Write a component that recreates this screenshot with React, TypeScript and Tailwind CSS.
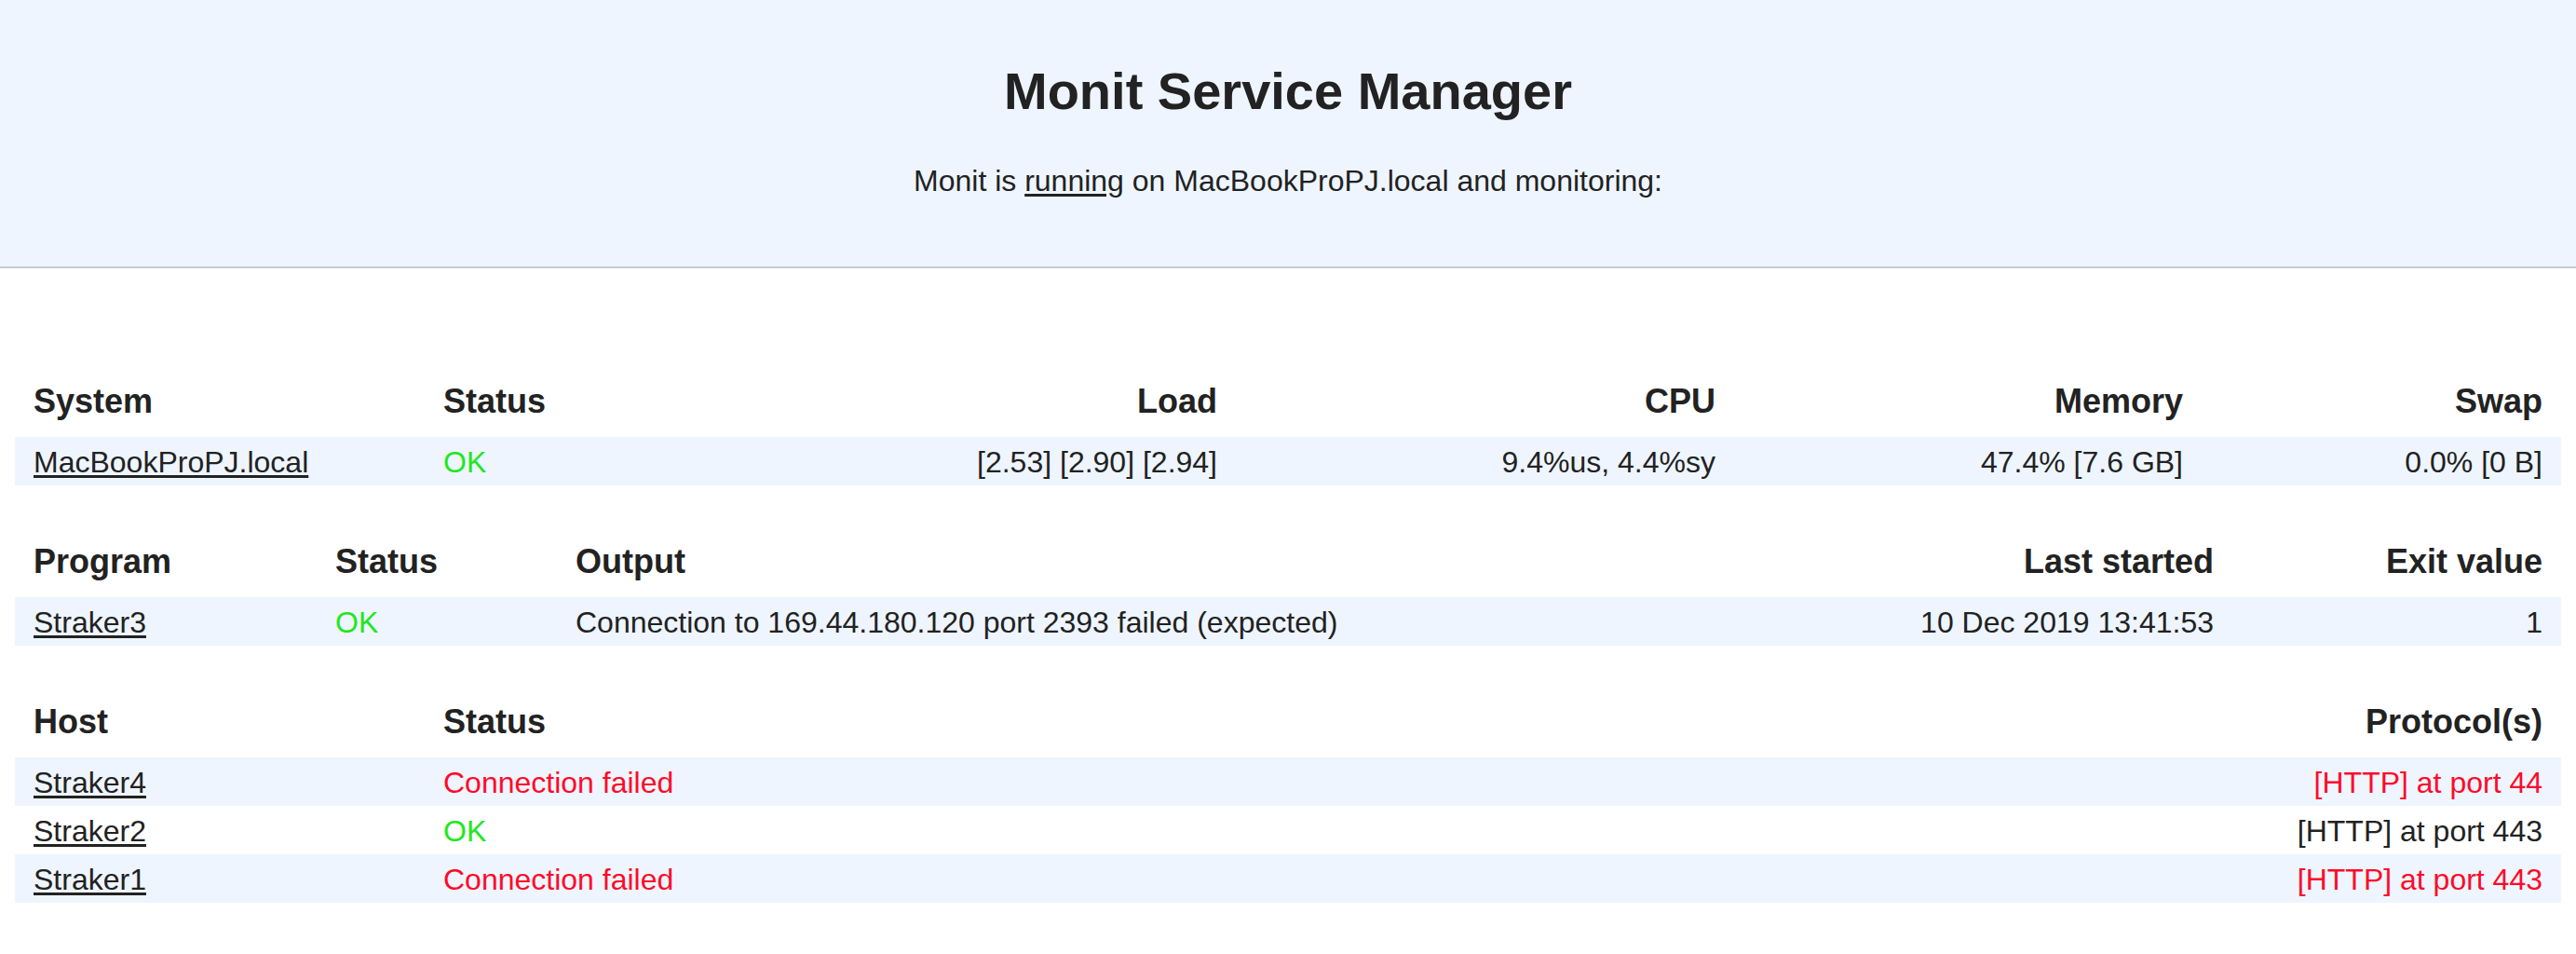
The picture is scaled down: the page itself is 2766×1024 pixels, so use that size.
const GREEN = 'text-[#1ee81e]'
const RED = 'text-[#ff0a2a]'

const th = 'px-5 pb-[18px] text-[36px] leading-[40px] font-bold'
const td = 'px-5 pt-[9px] pb-[7px] text-[32px] leading-[36px] whitespace-nowrap'

function Link({ children }: { children: string }) {
  return <a href="#" className="underline underline-offset-[3px] text-[#222]">{children}</a>
}

const hosts = [
  { name: 'Straker4', ok: false, proto: '[HTTP] at port 44' },
  { name: 'Straker2', ok: true, proto: '[HTTP] at port 443' },
  { name: 'Straker1', ok: false, proto: '[HTTP] at port 443' }
]

export default function App() {
  return (
    <div className="min-h-screen bg-white text-[#222] font-['Liberation_Sans',Arial,sans-serif]">
      {/* banner */}
      <header className="bg-[#eef5fe] border-b-2 border-[#c7cacd] text-center pt-[66px] pb-[74px]">
        <h1 className="text-[56px] leading-[64px] font-bold">Monit Service Manager</h1>
        <p className="mt-[46px] text-[32px] leading-[36px]">
          Monit is <Link>running</Link> on MacBookProPJ.local and monitoring:
        </p>
      </header>

      <main className="px-4 pt-[123px]">
        {/* system */}
        <table className="w-full table-fixed border-collapse mb-[62px]">
          <colgroup>
            <col className="w-[440px]" />
            <col className="w-[360px]" />
            <col className="w-[511px]" />
            <col className="w-[535px]" />
            <col className="w-[502px]" />
            <col />
          </colgroup>
          <thead>
            <tr>
              <th className={`${th} text-left`}>System</th>
              <th className={`${th} text-left`}>Status</th>
              <th className={`${th} text-right`}>Load</th>
              <th className={`${th} text-right`}>CPU</th>
              <th className={`${th} text-right`}>Memory</th>
              <th className={`${th} text-right`}>Swap</th>
            </tr>
          </thead>
          <tbody>
            <tr className="bg-[#eef5fe]">
              <td className={td}><Link>MacBookProPJ.local</Link></td>
              <td className={`${td} ${GREEN}`}>OK</td>
              <td className={`${td} text-right`}>[2.53] [2.90] [2.94]</td>
              <td className={`${td} text-right`}>9.4%us, 4.4%sy</td>
              <td className={`${td} text-right`}>47.4% [7.6 GB]</td>
              <td className={`${td} text-right`}>0.0% [0 B]</td>
            </tr>
          </tbody>
        </table>

        {/* program */}
        <table className="w-full table-fixed border-collapse mb-[62px]">
          <colgroup>
            <col className="w-[324px]" />
            <col className="w-[258px]" />
            <col className="w-[1300px]" />
            <col className="w-[499px]" />
            <col />
          </colgroup>
          <thead>
            <tr>
              <th className={`${th} text-left`}>Program</th>
              <th className={`${th} text-left`}>Status</th>
              <th className={`${th} text-left`}>Output</th>
              <th className={`${th} text-right`}>Last started</th>
              <th className={`${th} text-right`}>Exit value</th>
            </tr>
          </thead>
          <tbody>
            <tr className="bg-[#eef5fe]">
              <td className={td}><Link>Straker3</Link></td>
              <td className={`${td} ${GREEN}`}>OK</td>
              <td className={td}>Connection to 169.44.180.120 port 2393 failed (expected)</td>
              <td className={`${td} text-right`}>10 Dec 2019 13:41:53</td>
              <td className={`${td} text-right`}>1</td>
            </tr>
          </tbody>
        </table>

        {/* hosts */}
        <table className="w-full table-fixed border-collapse">
          <colgroup>
            <col className="w-[440px]" />
            <col className="w-[1000px]" />
            <col />
          </colgroup>
          <thead>
            <tr>
              <th className={`${th} text-left`}>Host</th>
              <th className={`${th} text-left`}>Status</th>
              <th className={`${th} text-right`}>Protocol(s)</th>
            </tr>
          </thead>
          <tbody>
            {hosts.map((h, i) => (
              <tr key={h.name} className={i % 2 === 0 ? 'bg-[#eef5fe]' : 'bg-white'}>
                <td className={td}><Link>{h.name}</Link></td>
                <td className={`${td} ${h.ok ? GREEN : RED}`}>{h.ok ? 'OK' : 'Connection failed'}</td>
                <td className={`${td} text-right ${h.ok ? '' : RED}`}>{h.proto}</td>
              </tr>
            ))}
          </tbody>
        </table>
      </main>
    </div>
  )
}
